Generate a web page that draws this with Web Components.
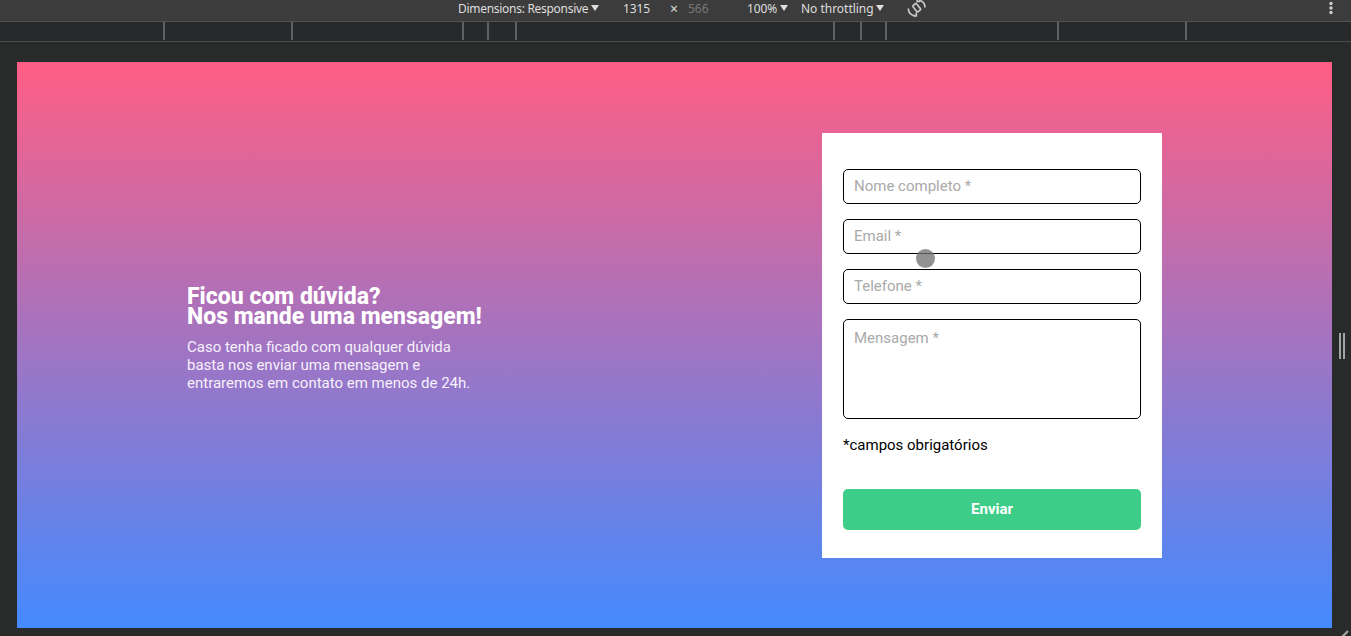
<!DOCTYPE html>
<html lang="pt-BR">
<head>
<meta charset="utf-8">
<title>Contato</title>
<style>
html,body{margin:0;height:100%;overflow:hidden;background:#292a2b}
</style>
</head>
<body>
<device-shell>
  <device-toolbar slot="toolbar"></device-toolbar>
  <media-ruler slot="ruler"></media-ruler>
  <contact-page>
    <contact-intro slot="intro"></contact-intro>
    <contact-form slot="form">
      <form-field>Nome completo *</form-field>
      <form-field>Email *</form-field>
      <form-field>Telefone *</form-field>
      <form-field multiline>Mensagem *</form-field>
    </contact-form>
  </contact-page>
</device-shell>
<script>
const define = (name, html, setup) => customElements.define(name, class extends HTMLElement {
  constructor() {
    super();
    const t = document.createElement('template');
    t.innerHTML = html;
    this.attachShadow({mode: 'open'}).append(t.content.cloneNode(true));
    if (setup) setup(this.shadowRoot);
  }
});

define('device-shell', `
<style>
:host{display:flex;flex-direction:column;width:1351px;height:636px;overflow:hidden;position:relative;background:#292a2a}
.stage{display:grid;grid-template-columns:1315px 1fr;padding:20px 0 0 17px;height:566px}
.handle{display:flex;align-items:center;justify-content:center;gap:2px;padding:2px 0 0 1px}
.handle i{width:2px;height:26px;background:#a3a4a5}
.corner{position:absolute;right:0;bottom:0;display:block}
</style>
<slot name="toolbar"></slot>
<slot name="ruler"></slot>
<div class="stage"><slot></slot><div class="handle"><i></i><i></i></div></div>
<svg class="corner" width="10" height="6" viewBox="0 0 10 6"><path d="M0 8 7 1" stroke="#a3a4a5" stroke-width="2.2"/></svg>
`);

define('device-toolbar', `
<style>
:host{display:flex;box-sizing:border-box;height:22px;background:#3c3c3c;border-bottom:1px solid #505153;color:#dedede;font:12px/18px "Noto Sans","Open Sans",sans-serif;padding-left:458px;white-space:nowrap}
span{display:block;flex:none;height:18px}
.dim{width:133px;letter-spacing:-.29px}
.arrow{width:8px;height:6px;margin-top:5px;fill:#dedede;flex:none;display:block}
.w{width:47px;margin-left:24px;letter-spacing:-.1px}
.x{width:18px;font-size:14px}
.h{width:59px;color:#777}
.zoom{width:33px;letter-spacing:-.1px}
.thr{width:75px;margin-left:13px;letter-spacing:-.02px}
.rotate{margin-left:23px;flex:none}
.more{margin-left:auto;margin-right:18px;flex:none}
</style>
<span class="dim">Dimensions: Responsive</span>
<svg class="arrow" viewBox="0 0 8 6"><path d="M0 0h8L4 6z"/></svg>
<span class="w">1315</span><span class="x">×</span><span class="h">566</span>
<span class="zoom">100%</span>
<svg class="arrow" viewBox="0 0 8 6"><path d="M0 0h8L4 6z"/></svg>
<span class="thr">No throttling</span>
<svg class="arrow" viewBox="0 0 8 6"><path d="M0 0h8L4 6z"/></svg>
<svg class="rotate" width="20" height="18" viewBox="0 0 20 18" fill="none" stroke="#c8c8c8" stroke-width="1.700"><rect x="7.400" y="3.700" width="4.600" height="8" rx="1" transform="rotate(-38 9.700 7.700)"/><path d="M12 .2c3.600.7 5.900 3.500 6 7.200M7.500 15.700c-3.600-.7-6-3.500-6.200-7.200M9.300 12.600v3.300H6M10.200-1v2.500h3"/></svg>
<svg class="more" width="6" height="18" viewBox="0 0 6 18" fill="#cecece"><circle cx="4" cy="3.500" r="1.700"/><circle cx="4" cy="8" r="1.700"/><circle cx="4" cy="12.500" r="1.700"/></svg>
`);

define('media-ruler', `
<style>
:host{display:grid;box-sizing:border-box;height:20px;padding-bottom:1px;background:#28292a;border-bottom:1px solid #4b4c4e;grid-template-columns:165px 128px 171px 25px 28px 318px 27px 25px 172px 128px}
i{border-right:2px solid #606162}
</style>
`, root => { for (let n = 0; n < 10; n++) root.append(document.createElement('i')); });

define('contact-page', `
<style>
:host{display:grid;grid-template-columns:635px 340px;justify-content:center;align-items:center;box-sizing:border-box;width:1315px;height:566px;background:linear-gradient(#ff5e84,#448aff);font-family:Roboto,sans-serif}
</style>
<slot name="intro"></slot><slot name="form"></slot>
`);

define('contact-intro', `
<style>
:host{display:block;color:#fff;padding-bottom:12px}
h1{font-size:23px;line-height:20px;font-weight:800;margin:0 0 11px;white-space:nowrap}
p{font-size:15px;line-height:18px;margin:0;white-space:nowrap;color:#f6f0fb}
</style>
<h1>Ficou com dúvida?<br>Nos mande uma mensagem!</h1>
<p>Caso tenha ficado com qualquer dúvida<br>basta nos enviar uma mensagem e<br>entraremos em contato em menos de 24h.</p>
`);

define('contact-form', `
<style>
:host{display:flex;flex-direction:column;box-sizing:border-box;width:340px;height:425px;padding:36px 21px 28px;background:#fff;position:relative;font-size:15px;color:#000}
.fields{display:grid;gap:15px}
p{margin:17px 0 35px;line-height:18px}
button{height:41px;border:0;border-radius:5px;background:#3dcd88;color:#fff;font:700 15px/18px Roboto,sans-serif;padding:0 0 1px}
.pointer{position:absolute;left:94px;top:116px;width:19px;height:19px;border-radius:50%;background:rgba(112,112,112,.76)}
</style>
<div class="fields"><slot></slot></div>
<p>*campos obrigatórios</p>
<button>Enviar</button>
<div class="pointer"></div>
`);

define('form-field', `
<style>
:host{display:block;box-sizing:border-box;height:35px;border:1px solid #000;border-radius:5px;padding:7px 10px;color:#a9a9a9;font-size:15px;line-height:18px}
:host([multiline]){height:100px;padding-top:9px}
</style>
<slot></slot>
`);
</script>
</body>
</html>
